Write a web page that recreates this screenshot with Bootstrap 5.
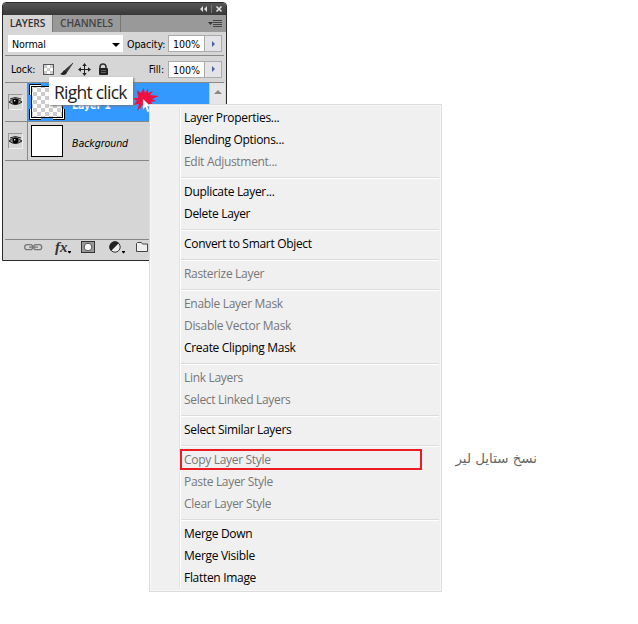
<!DOCTYPE html>
<html lang="en">
<head>
<meta charset="utf-8">
<meta name="viewport" content="width=device-width, initial-scale=1">
<title>Layers panel</title>
<link href="https://cdn.jsdelivr.net/npm/bootstrap@5.3.0/dist/css/bootstrap.min.css" rel="stylesheet">
<style>
body{width:638px;height:624px;background:#fff;overflow:hidden;font-family:"Open Sans","Noto Sans",sans-serif}
svg{display:block;flex:none}
.panel{left:2px;top:2px;width:225px;height:259px;background:#d6d6d6;border:1px solid #2b2b2b;border-radius:4px 4px 0 0;font:10.6px/14px "DejaVu Sans Condensed","DejaVu Sans",sans-serif;color:#000;letter-spacing:-.1px}
.titlebar{height:12px;background:linear-gradient(#555,#383838)}
.tabs{height:17px;background:#999;font:600 10.2px/17px "Open Sans",sans-serif}
.tab{height:17px;color:#444;border-right:1px solid #777;letter-spacing:-.1px}
.tab.on{width:50px;background:#d6d6d6;color:#333}
.tab.off{width:68px}
.opts{height:24px;margin:0 2px;border-bottom:1px solid #888}
.opts.lock{height:27px}
.opts.lock .cap{margin:0 5px 0 6px}
.mode{width:115px;height:17px;background:#fff;margin-left:3px}
.num{width:37px;height:17px;background:#fff;border:1px solid #aaa;padding-left:4px;line-height:16px}
.step{width:17px;height:17px;background:#e4e4e8;border:1px solid #aaa;border-left:0;margin-right:2px}
.lrow{height:39px;margin-left:2px;border-bottom:1px solid #888}
.eyecell{width:23px;border-right:1px solid #888;padding-right:2px}
.eyebox{width:15px;height:16px;border:1px solid #999;border-right-color:#eee;border-bottom-color:#eee}
.sel{width:181px;background:#39f;color:#fff;font-weight:bold;padding-left:1px}
.lname{margin:5px 0 0 7px}
.thumb{width:32px;height:32px;border:1px solid #000;background:#fff;margin:0 5px 0 3px}
.scroller{width:16px;height:38px;background:#e6e6e6;border-left:1px solid #ccc}
.foot{height:21px;margin:0 2px;border-top:1px solid #888}
.ctx{left:149px;top:104px;width:293px;height:488px;background:#f0f0f0;border:1px solid #dcdcdc;padding:2px;box-shadow:inset 0 0 0 1px #f7f7f7;font-size:12px;line-height:22px;color:#000}
.ctx .gutter{width:28px;border-right:1px solid #e2e3e3;box-shadow:1px 0 #fff}
.ctx ul{padding-left:4px}
.ctx li{height:22px;white-space:nowrap;letter-spacing:-.31px}
.ctx li.dim{color:#777}
.ctx li.rule{height:1px;margin:4px 0 3px -3px;background:#dcdcdc;box-shadow:0 1px #fff}
.redbox{left:180px;top:449px;width:242px;height:21px;border:2px solid #ed1c24}
.tip{left:49px;top:77px;width:84px;height:28px;background:#fff;box-shadow:1px 1px 2px #777;font-size:17.5px;line-height:30px;color:#222;padding-left:5px;letter-spacing:-.75px;white-space:nowrap}
.burst{left:131px;top:87px}
.note{left:455px;top:446px;width:82px;font:13.4px/26px "DejaVu Sans",sans-serif;color:#666;white-space:nowrap}
</style>
<script src="https://cdn.jsdelivr.net/npm/bootstrap@5.3.0/dist/js/bootstrap.bundle.min.js"></script>
</head>
<body class="position-relative m-0">

<section class="panel position-absolute d-flex flex-column overflow-hidden">
  <div class="titlebar d-flex justify-content-end">
    <svg width="28" height="12" viewBox="0 0 28 12"><path d="M5 3v6L2 6zM9 3v6L6 6z" fill="#ddd"/><path d="M13.500 2v8" stroke="#777"/><path d="M18.500 3.500l5 5m0-5l-5 5" stroke="#ddd" stroke-width="1.700"/></svg>
  </div>
  <div class="tabs d-flex">
    <div class="tab on text-center">LAYERS</div>
    <div class="tab off text-center">CHANNELS</div>
    <svg class="ms-auto" width="18" height="17" viewBox="0 0 18 17"><path d="M0 7h5L2.500 10z" fill="#333"/><path d="M5 5.500h9M5 7.500h9M5 9.500h9M5 11.500h9" stroke="#444"/></svg>
  </div>
  <div class="opts d-flex align-items-center">
    <div class="mode d-flex align-items-center justify-content-between"><span class="ps-1">Normal</span>
      <svg width="14" height="10" viewBox="0 0 14 10"><path d="M3 4h8L7 8z"/></svg></div>
    <span class="ms-1 me-auto">Opacity:</span>
    <div class="num">100%</div>
    <div class="step d-flex align-items-center justify-content-center"><svg width="5" height="6" viewBox="0 0 5 6"><path d="M1 0v6l3-3z" fill="#46639a"/></svg></div>
  </div>
  <div class="opts lock d-flex align-items-center">
    <span class="cap">Lock:</span>
    <svg width="100" height="14" viewBox="0 0 100 14">
      <rect x="3.500" y="2.500" width="10" height="10" fill="#fff" stroke="#555"/>
      <path d="M4 3h3v3H4zM10 3h3v3h-3zM7 6h3v3H7zM4 9h3v3H4zM10 9h3v3h-3z" fill="#ccc"/>
      <path d="M33 1l-8 7 2 2z" fill="#333" stroke="#333" stroke-width=".6"/><path d="M25 8c-2 0-2 3-5 4 3 2 7 1 7-2z" fill="#222"/>
      <path d="M39 7.500h11M44.500 2v11" stroke="#222"/><path d="M44.500 1l-2.200 3h4.400zM44.500 14l-2.200-3h4.400zM38 7.500l3-2.200v4.400zM51 7.500l-3-2.200v4.400z" fill="#222"/>
      <path d="M60 7V5a3 3 0 0 1 6 0v2" fill="none" stroke="#333" stroke-width="1.600"/><rect x="59" y="6" width="9" height="7" rx="1" fill="#222"/><path d="M61 8.500h5M61 10.500h5" stroke="#777" stroke-width=".7"/>
    </svg>
    <span class="ms-auto pe-1">Fill:</span>
    <div class="num">100%</div>
    <div class="step d-flex align-items-center justify-content-center"><svg width="5" height="6" viewBox="0 0 5 6"><path d="M1 0v6l3-3z" fill="#46639a"/></svg></div>
  </div>
  <div class="lrow d-flex">
    <div class="eyecell d-flex align-items-center justify-content-center"><div class="eyebox d-flex align-items-center"><svg width="13" height="10" viewBox="0 0 13 10"><path d="M0 5Q6-1 13 5Q6 10 0 5" fill="#999" stroke="#222"/><circle cx="6.500" cy="4.500" r="3" fill="#000"/><path d="M1 2Q6-1 12 2" fill="none" stroke="#222"/><circle cx="5.700" cy="3.700" r=".8" fill="#fff"/></svg></div></div>
    <div class="sel d-flex align-items-center">
      <svg width="36" height="36" viewBox="0 0 36 36">
        <defs><pattern id="chk" width="8" height="8" patternUnits="userSpaceOnUse"><rect width="8" height="8" fill="#fff"/><path d="M4 0h4v4H4zM0 4h4v4H0z" fill="#ccc"/></pattern></defs>
        <path d="M1.500 11V1.500H12M24 1.500h10.500V11M34.500 25v9.500H24M12 34.500H1.500V25" fill="none" stroke="#fff" stroke-width="2"/>
        <path d="M.5 11V.5H12M24 .5h11.500V11M35.500 25v10.500H24M12 35.500H.5V25" fill="none" stroke="#000"/>
        <rect x="2.500" y="2.500" width="31" height="31" fill="url(#chk)" stroke="#000"/>
      </svg>
      <span class="lname">Layer 1</span>
    </div>
    <div class="scroller d-flex justify-content-center"><svg class="mt-1" width="8" height="10" viewBox="0 0 8 10"><path d="M0 7h8L4 3z" fill="#888"/></svg></div>
  </div>
  <div class="lrow d-flex">
    <div class="eyecell d-flex align-items-center justify-content-center"><div class="eyebox d-flex align-items-center"><svg width="13" height="10" viewBox="0 0 13 10"><path d="M0 5Q6-1 13 5Q6 10 0 5" fill="#999" stroke="#222"/><circle cx="6.500" cy="4.500" r="3" fill="#000"/><path d="M1 2Q6-1 12 2" fill="none" stroke="#222"/><circle cx="5.700" cy="3.700" r=".8" fill="#fff"/></svg></div></div>
    <div class="d-flex align-items-center"><div class="thumb"></div><span class="ps-1 pt-1 fst-italic">Background</span></div>
  </div>
  <div class="foot mt-auto">
    <svg width="145" height="19" viewBox="0 0 145 19">
      <g fill="none" stroke="#777" stroke-width="1.300"><rect x="19.700" y="4.700" width="8" height="5" rx="2.500"/><rect x="28.700" y="4.700" width="8" height="5" rx="2.500"/><path d="M24 7.200h9"/></g>
      <text x="50" y="12" font-family="Liberation Serif, serif" font-size="15" font-style="italic" font-weight="bold" fill="#333">fx</text>
      <path d="M63 11h3v1l-1.500 1.500L63 12zM117 11h3v1l-1.500 1.500L117 12z"/>
      <rect x="76.500" y="1.500" width="13" height="11" fill="#999" stroke="#333"/><circle cx="83" cy="7" r="3.800" fill="#fff" stroke="#555"/>
      <circle cx="110" cy="7" r="5.200" fill="#eee" stroke="#333"/><path d="M106 11A5.200 5.200 0 0 1 114 3z" fill="#222"/>
      <path d="M131.500 11.500v-8l1-1h4l1 1.500h5v7.500z" fill="#eee" stroke="#444"/>
    </svg>
  </div>
</section>

<svg class="burst position-absolute" width="30" height="27" viewBox="0 0 30 27">
  <path d="M6 3l4 3 2.500-5 1.500 5 3-4 0 4 5-2-3 4 9 1-7 3 4 2-5 1 3 4-6-2-2 5-3-4-6 6 2-7-6 1 4-4-5-3h6z" fill="#f0103f"/>
  <path d="M12 12v10.500l2.500-2.500 2 5.300 2-1-2.200-5h3z" fill="#fff" stroke="#aab" stroke-width=".4"/>
</svg>
<div class="tip position-absolute">Right click</div>

<nav class="ctx position-absolute d-flex">
  <div class="gutter flex-shrink-0"></div>
  <ul class="list-unstyled m-0 flex-grow-1">
    <li>Layer Properties...</li><li>Blending Options...</li><li class="dim">Edit Adjustment...</li>
    <li class="rule"></li>
    <li>Duplicate Layer...</li><li>Delete Layer</li>
    <li class="rule"></li>
    <li>Convert to Smart Object</li>
    <li class="rule"></li>
    <li class="dim">Rasterize Layer</li>
    <li class="rule"></li>
    <li class="dim">Enable Layer Mask</li><li class="dim">Disable Vector Mask</li><li>Create Clipping Mask</li>
    <li class="rule"></li>
    <li class="dim">Link Layers</li><li class="dim">Select Linked Layers</li>
    <li class="rule"></li>
    <li>Select Similar Layers</li>
    <li class="rule"></li>
    <li class="dim">Copy Layer Style</li><li class="dim">Paste Layer Style</li><li class="dim">Clear Layer Style</li>
    <li class="rule"></li>
    <li>Merge Down</li><li>Merge Visible</li><li>Flatten Image</li>
  </ul>
</nav>
<div class="redbox position-absolute"></div>
<div class="note position-absolute" dir="rtl" lang="fa">نسخ ستایل لیر</div>
</body>
</html>
